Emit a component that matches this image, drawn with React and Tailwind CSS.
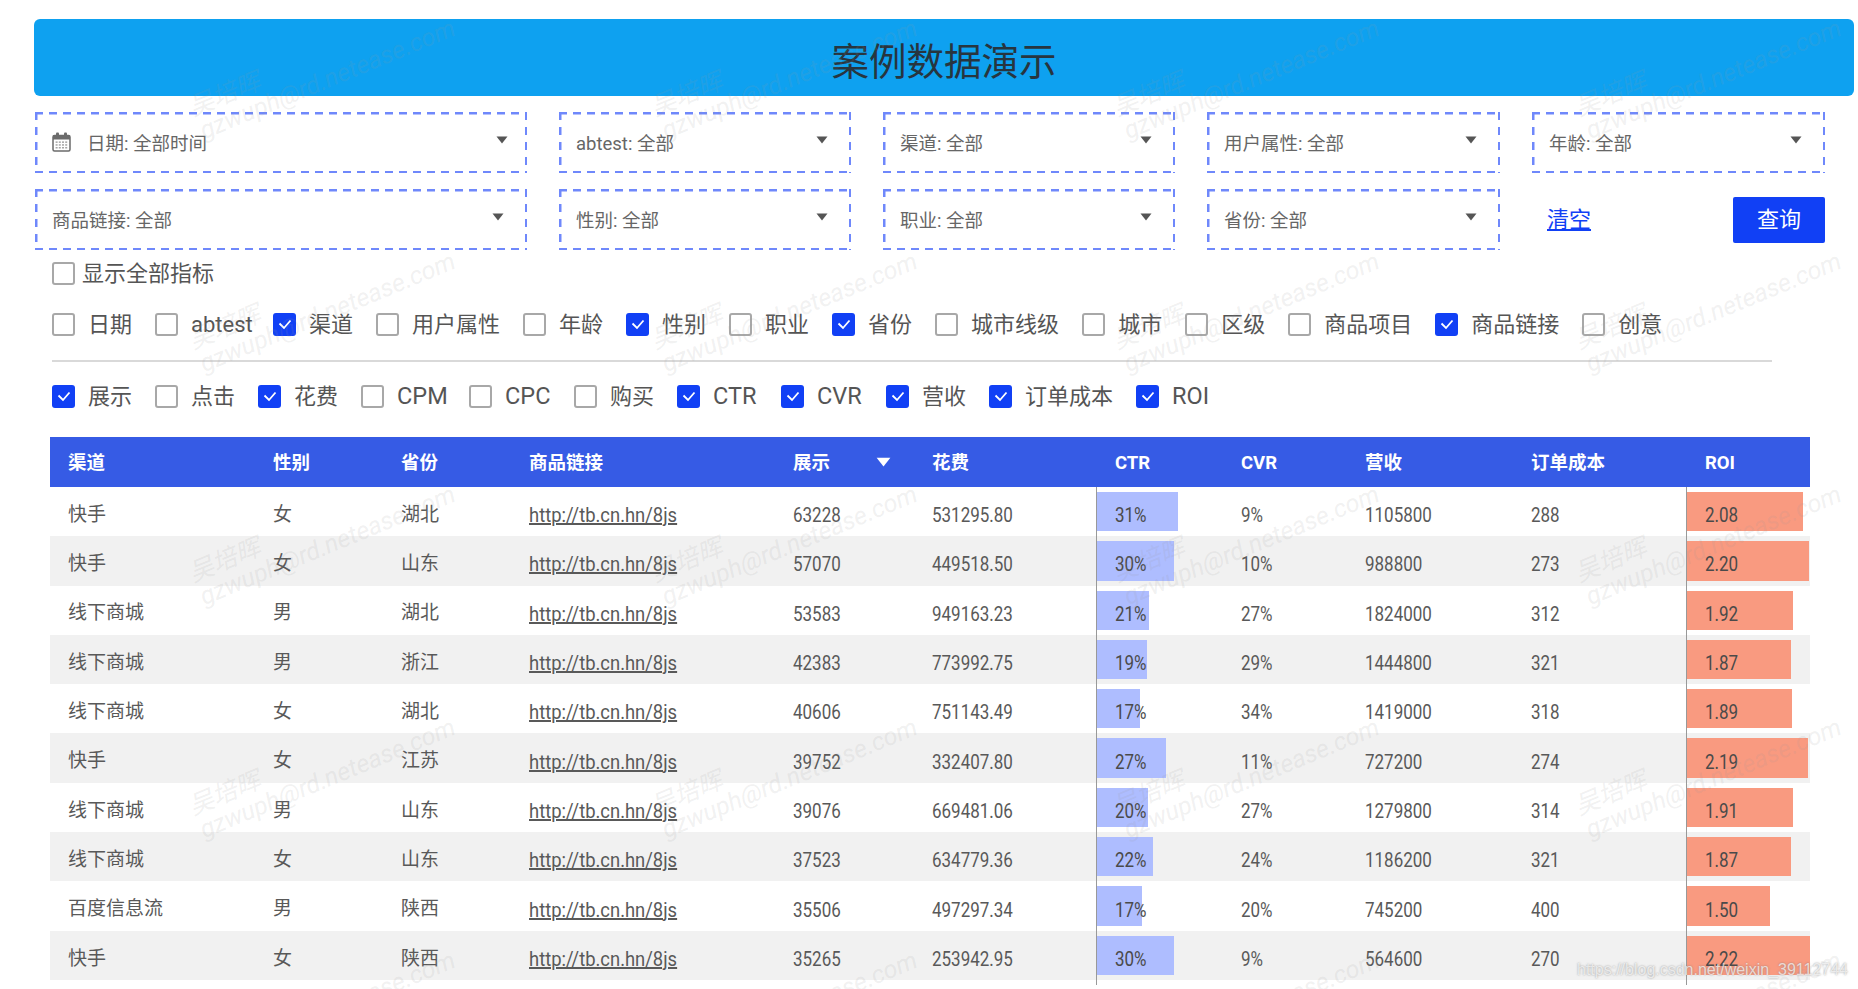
import React from "react";

const filterRow1 = ["abtest: 全部", "渠道: 全部", "用户属性: 全部", "年龄: 全部"];
const filterRow2 = ["性别: 全部", "职业: 全部", "省份: 全部"];
const dims = [
  ["日期", false], ["abtest", false, "w-[59px]"], ["渠道", true], ["用户属性", false], ["年龄", false], ["性别", true], ["职业", false],
  ["省份", true], ["城市线级", false], ["城市", false], ["区级", false], ["商品项目", false], ["商品链接", true], ["创意", false],
];
const metrics = [
  ["展示", true], ["点击", false], ["花费", true], ["CPM", false, "w-[49px]"], ["CPC", false, "w-[46px]"], ["购买", false], ["CTR", true, "w-[45px]"], ["CVR", true, "w-[46px]"],
  ["营收", true], ["订单成本", true], ["ROI", true],
];
const rows = [
  ["快手", "女", "湖北", "63228", "531295.80", "31%", 81, "9%", "1105800", "288", "2.08", 116],
  ["快手", "女", "山东", "57070", "449518.50", "30%", 77, "10%", "988800", "273", "2.20", 122],
  ["线下商城", "男", "湖北", "53583", "949163.23", "21%", 52, "27%", "1824000", "312", "1.92", 106],
  ["线下商城", "男", "浙江", "42383", "773992.75", "19%", 50, "29%", "1444800", "321", "1.87", 104],
  ["线下商城", "女", "湖北", "40606", "751143.49", "17%", 43, "34%", "1419000", "318", "1.89", 105],
  ["快手", "女", "江苏", "39752", "332407.80", "27%", 69, "11%", "727200", "274", "2.19", 121],
  ["线下商城", "男", "山东", "39076", "669481.06", "20%", 51, "27%", "1279800", "314", "1.91", 106],
  ["线下商城", "女", "山东", "37523", "634779.36", "22%", 56, "24%", "1186200", "321", "1.87", 104],
  ["百度信息流", "男", "陕西", "35506", "497297.34", "17%", 45, "20%", "745200", "400", "1.50", 83],
  ["快手", "女", "陕西", "35265", "253942.95", "30%", 77, "9%", "564600", "270", "2.22", 123],
];
const gridCols = "grid grid-cols-[205px_128px_128px_264px_139px_183px_126px_124px_166px_174px_123px]";
const dashed =
  "bg-no-repeat bg-[repeating-linear-gradient(90deg,#6f88fb_0_8px,transparent_8px_14px),repeating-linear-gradient(90deg,#6f88fb_0_8px,transparent_8px_14px),repeating-linear-gradient(180deg,#6f88fb_0_8px,transparent_8px_15px),repeating-linear-gradient(180deg,#6f88fb_0_8px,transparent_8px_15px)] [background-size:100%_2.5px,100%_2.5px,2.5px_100%,2.5px_100%] [background-position:0_0,0_100%,0_0,100%_0]";

function Caret({ className = "", w = 12, h = 8 }) {
  return (
    <svg width={w} height={h} viewBox="0 0 12 8" preserveAspectRatio="none" className={className}>
      <path d="M0.5 0.5H11.5L6 7.5Z" fill="currentColor" />
    </svg>
  );
}

function CalendarIcon() {
  return (
    <svg width="19" height="20" viewBox="0 0 19 20" className="text-[#6b6b6b] shrink-0">
      <rect x="1" y="3.5" width="17" height="15.5" rx="1.5" fill="none" stroke="currentColor" strokeWidth="1.5" />
      <rect x="1" y="3.5" width="17" height="4" fill="currentColor" />
      <rect x="4" y="0.5" width="3" height="5.5" rx="1" fill="currentColor" />
      <rect x="12" y="0.5" width="3" height="5.5" rx="1" fill="currentColor" />
      <g fill="currentColor" opacity="0.6">
        <rect x="3.6" y="9.4" width="2" height="1.5" /><rect x="6.8" y="9.4" width="2" height="1.5" /><rect x="10" y="9.4" width="2" height="1.5" /><rect x="13.2" y="9.4" width="2" height="1.5" />
        <rect x="3.6" y="12.2" width="2" height="1.5" /><rect x="6.8" y="12.2" width="2" height="1.5" /><rect x="10" y="12.2" width="2" height="1.5" /><rect x="13.2" y="12.2" width="2" height="1.5" />
        <rect x="3.6" y="15" width="2" height="1.5" /><rect x="6.8" y="15" width="2" height="1.5" /><rect x="10" y="15" width="2" height="1.5" /><rect x="13.2" y="15" width="2" height="1.5" />
      </g>
    </svg>
  );
}

function FilterBox({ label, icon, wide }) {
  return (
    <div className={`h-[61px] ${dashed} flex items-center justify-between pl-[17px] ${wide === "first" ? "pr-[19px]" : "pr-[23px]"}`}>
      <div className="flex items-center gap-[16px] text-[18.5px] leading-none text-[#666666] pt-[4px]">
        {icon ? <span className="-mt-[6px]"><CalendarIcon /></span> : null}
        <span>{label}</span>
      </div>
      <Caret className="text-[#555555] mb-[5px]" />
    </div>
  );
}

function Check({ label, checked, gap = "gap-[13px]", w = "" }) {
  const latin = /^[A-Z]+$/.test(label);
  return (
    <label className={`flex items-center ${gap}`}>
      {checked ? (
        <span className="w-[23px] h-[23px] rounded-[3px] bg-[#1140f5] flex items-center justify-center shrink-0">
          <svg width="14" height="11" viewBox="0 0 14 11">
            <path d="M1.5 4.5L6 9L12.5 1.5" fill="none" stroke="#ffffff" strokeWidth="1.8" />
          </svg>
        </span>
      ) : (
        <span className="w-[23px] h-[23px] rounded-[3px] border-2 border-[#a8a8a8] bg-white shrink-0" />
      )}
      <span className={`${latin ? "text-[23.5px]" : "text-[22px]"} leading-[23px] text-[#555555] whitespace-nowrap ${w}`}>{label}</span>
    </label>
  );
}

function Cell({ children, className = "" }) {
  return <div className={`pl-[18px] flex items-center ${className}`}>{children}</div>;
}

function Num({ children }) {
  return <span className="inline-block origin-left scale-x-[0.85] text-[20px] leading-none whitespace-nowrap">{children}</span>;
}

function BarCell({ value, width, color }) {
  return (
    <div className="relative flex items-center pl-[18px] pt-[7px] border-l border-[#999999] ml-[-1px]">
      <div className={`absolute left-0 top-[5px] bottom-[5px] ${color}`} style={{ width }} />
      <span className="relative flex text-[#4a4a4a]"><Num>{value}</Num></span>
    </div>
  );
}

function Watermark() {
  const xs = [201, 663, 1125, 1587];
  const ys = [133, 366, 599, 832, 1065];
  return (
    <div className="absolute inset-0 overflow-hidden pointer-events-none">
      {ys.flatMap((y) =>
        xs.map((x) => (
          <React.Fragment key={`${x}-${y}`}>
            <span
              className="absolute origin-left -rotate-[22.5deg] text-[25px] leading-none italic whitespace-nowrap text-[#999999]/15"
              style={{ left: x - 11, top: y - 37 }}
            >
              吴培晖
            </span>
            <span
              className="absolute origin-left -rotate-[22.5deg] text-[25px] leading-none italic whitespace-nowrap text-[#999999]/15"
              style={{ left: x, top: y - 14 }}
            >
              gzwuph@rd.netease.com
            </span>
          </React.Fragment>
        ))
      )}
    </div>
  );
}

export default function App() {
  return (
    <div className="relative w-[1858px] h-[989px] overflow-hidden bg-white pt-[19px] font-['Roboto','Noto_Sans_CJK_SC',sans-serif]">
      <div className="ml-[34px] w-[1820px] h-[77px] rounded-[6px] bg-[#0ea1f0] flex items-center justify-center pt-[11px] text-[37.5px] leading-none text-[#27353f]">
        案例数据演示
      </div>

      <div className="ml-[35px] mt-[16px] grid grid-cols-[492px_292px_292px_293px_293px] gap-x-[32px] gap-y-[16px]">
        <FilterBox label="日期: 全部时间" icon wide="first" />
        {filterRow1.map((f) => <FilterBox key={f} label={f} />)}
        <FilterBox label="商品链接: 全部" />
        {filterRow2.map((f) => <FilterBox key={f} label={f} />)}
        <div className="flex items-center justify-between pl-[15px]">
          <a className="text-[22px] leading-none text-[#1140f5] underline">清空</a>
          <button className="w-[92px] h-[46px] rounded-[2px] bg-[#1140f5] text-white text-[22px] leading-none">查询</button>
        </div>
      </div>

      <div className="ml-[52px] mt-[12px]">
        <Check label="显示全部指标" gap="gap-[7px]" />
      </div>

      <div className="ml-[52px] mt-[28px] flex gap-[23px]">
        {dims.map(([l, c, w]) => <Check key={l} label={l} checked={c} w={w} />)}
      </div>

      <div className="ml-[52px] mt-[24px] w-[1720px] h-[2px] bg-[#d9d9d9]" />

      <div className="ml-[52px] mt-[23px] flex gap-[23px]">
        {metrics.map(([l, c, w]) => <Check key={l} label={l} checked={c} w={w} />)}
      </div>

      <div className="ml-[50px] mt-[29px] w-[1760px] text-[#595959]">
        <div className={`${gridCols} h-[50px] bg-[#365be5] text-white text-[18.5px] font-bold`}>
          {["渠道", "性别", "省份", "商品链接"].map((h) => <Cell key={h} className="pt-[4px]">{h}</Cell>)}
          <Cell className="pt-[4px] gap-[46px]">展示<Caret className="text-white mb-[4px]" w={15} h={10} /></Cell>
          {["花费", "CTR", "CVR", "营收", "订单成本", "ROI"].map((h) => <Cell key={h} className="pt-[4px]">{h}</Cell>)}
        </div>
        {rows.map((r, i) => (
          <div key={i} className={`${gridCols} h-[49.3px] ${i % 2 === 1 ? "bg-[#f1f1f1]" : "bg-transparent"}`}>
            <Cell className="pt-[7px] text-[19px]">{r[0]}</Cell>
            <Cell className="pt-[7px] text-[19px]">{r[1]}</Cell>
            <Cell className="pt-[7px] text-[19px]">{r[2]}</Cell>
            <Cell className="pt-[7px]">
              <span className="inline-block origin-left scale-x-[0.92] text-[20px] leading-none underline whitespace-nowrap">http://tb.cn.hn/8js</span>
            </Cell>
            <Cell className="pt-[7px]"><Num>{r[3]}</Num></Cell>
            <Cell className="pt-[7px]"><Num>{r[4]}</Num></Cell>
            <BarCell value={r[5]} width={r[6]} color="bg-[#aebdff]" />
            <Cell className="pt-[7px]"><Num>{r[7]}</Num></Cell>
            <Cell className="pt-[7px]"><Num>{r[8]}</Num></Cell>
            <Cell className="pt-[7px]"><Num>{r[9]}</Num></Cell>
            <BarCell value={r[10]} width={r[11]} color="bg-[#f99a80]" />
          </div>
        ))}
        <div className={`${gridCols} h-[5px]`}>
          <div className="col-start-7 border-l border-[#999999] ml-[-1px]" />
          <div className="col-start-11 border-l border-[#999999] ml-[-1px]" />
        </div>
      </div>

      <Watermark />

      <div className="absolute left-[1577px] top-[960px] text-[16px] leading-[20px] whitespace-nowrap font-['Liberation_Sans',sans-serif] text-white/70 [text-shadow:0_0_2px_rgba(110,110,110,0.7)]">
        https://blog.csdn.net/weixin_39112744
      </div>
    </div>
  );
}
